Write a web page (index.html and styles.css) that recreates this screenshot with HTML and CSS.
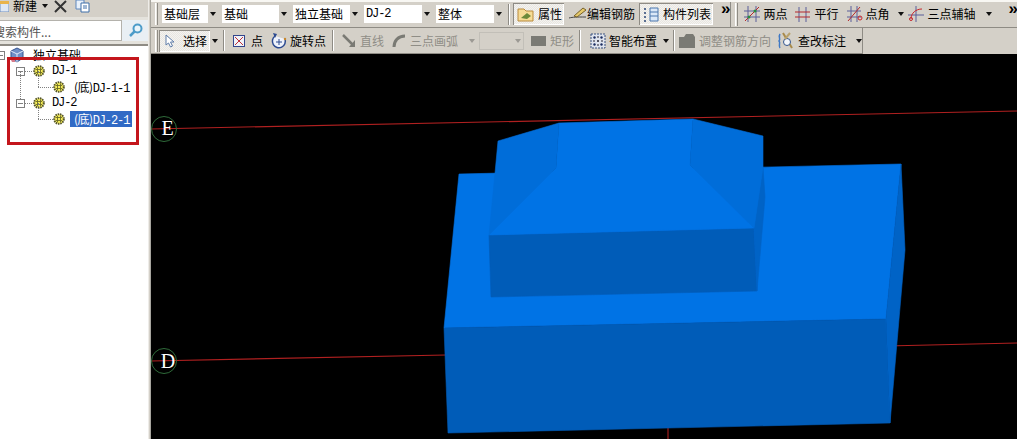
FILE: index.html
```html
<!DOCTYPE html>
<html lang="zh">
<head>
<meta charset="utf-8">
<title>独立基础</title>
<link rel="stylesheet" href="styles.css">
</head>
<body>
<svg class="defs" width="0" height="0">
  <symbol id="gear" viewBox="0 0 12 12">
    <circle cx="6" cy="6" r="4.800" fill="#f7ee5a" stroke="#55552a" stroke-width="2" stroke-dasharray="1.500 .8"/>
    <path d="M3 4.500h6M3 7.500h6M4.500 3v6M7.500 3v6" stroke="#6b6b26" stroke-width=".9"/>
  </symbol>
</svg>
<div class="app">
  <aside class="side">
    <div class="side-top">
      <svg class="ic-new" width="9" height="11" viewBox="0 0 9 11"><path d="M0 2h9v9H0z" fill="#dfe8f4" stroke="#6d8fbf"/><path d="M0 0h9v3H0z" fill="#e9b44c"/></svg>
      <span class="side-new">新建</span>
      <i class="arrow side-arrow"></i>
      <svg class="ic-x" width="13" height="13" viewBox="0 0 13 13"><path d="M1 1l11 11M12 1L1 12" stroke="#333" stroke-width="2"/></svg>
      <svg class="ic-copy" width="15" height="13" viewBox="0 0 15 13"><path d="M1 0h8v9H1z" fill="#e8f0fa" stroke="#5e87bd"/><path d="M6 3h8v9H6z" fill="#fff" stroke="#3f6ea8"/><path d="M8 6h4M8 8h4" stroke="#3f6ea8"/></svg>
    </div>
    <div class="search">
      <div class="search-box"><span class="search-text">搜索构件...</span></div>
      <div class="search-btn">
        <svg width="15" height="15" viewBox="0 0 15 15"><circle cx="9.500" cy="5.500" r="4" fill="#eaf5fb" stroke="#4d9cc9" stroke-width="2"/><path d="M6.500 8.500L2 13" stroke="#4d9cc9" stroke-width="2.500"/></svg>
      </div>
    </div>
    <div class="tree">
      <div class="node root">
        <span class="exp"></span>
        <svg class="cube" width="16" height="16" viewBox="0 0 16 16"><path d="M8 1l6 3v7l-6 4-6-4V4z" fill="#6f8fc8" stroke="#35538f"/><path d="M2 4l6 3 6-3M8 7v8" stroke="#dfe8f8" fill="none"/><path d="M1 11h5v4H3z" fill="#d87a8a"/></svg>
        <span class="lbl">独立基础</span>
      </div>
      <div class="node lvl1">
        <span class="exp"></span><i class="dash"></i><svg class="gear"><use href="#gear"/></svg><span class="lbl">DJ-1</span>
      </div>
      <div class="node lvl2 elbow">
        <i class="dash long"></i><svg class="gear"><use href="#gear"/></svg><span class="lbl pad"><span class="cjk">(底)</span>DJ-1-1</span>
      </div>
      <div class="node lvl1 up">
        <span class="exp"></span><i class="dash"></i><svg class="gear"><use href="#gear"/></svg><span class="lbl">DJ-2</span>
      </div>
      <div class="node lvl2 elbow">
        <i class="dash long"></i><svg class="gear"><use href="#gear"/></svg><span class="lbl pad sel"><span class="cjk">(底)</span>DJ-2-1</span>
      </div>
      <div class="redbox"></div>
    </div>
  </aside>
  <div class="split"></div>
  <main class="main">
    <div class="bar bar-1">
      <div class="tb tb-a">
        <i class="grip"></i>
        <div class="combo c1"><span class="combo-val">基础层</span><b class="combo-arrow"><i class="arrow"></i></b></div>
        <div class="combo c2"><span class="combo-val">基础</span><b class="combo-arrow"><i class="arrow"></i></b></div>
        <div class="combo c3"><span class="combo-val">独立基础</span><b class="combo-arrow"><i class="arrow"></i></b></div>
        <div class="combo c4"><span class="combo-val mono">DJ-2</span><b class="combo-arrow"><i class="arrow"></i></b></div>
        <div class="combo c5"><span class="combo-val">整体</span><b class="combo-arrow"><i class="arrow"></i></b></div>
        <i class="sep sep-a"></i>
        <div class="btn checked b-attr">
          <svg width="17" height="16" viewBox="0 0 17 16"><path d="M1 3h6l2 2h7v10H1z" fill="#f6dc96" stroke="#b98a3c"/><path d="M4 12l6-5 4 3-4 3z" fill="#6c8a3a"/></svg><span>属性</span>
        </div>
        <div class="btn b-edit">
          <svg width="18" height="14" viewBox="0 0 18 14"><path d="M0 11c4-1 7-1 17-1" stroke="#444" fill="none"/><path d="M5 9L14 1l3 2-9 7z" fill="#e6c96a" stroke="#77622a"/></svg><span>编辑钢筋</span>
        </div>
        <div class="btn checked b-list">
          <svg width="16" height="15" viewBox="0 0 16 15"><path d="M1 2h3M1 6h3M1 10h3M1 14h3" stroke="#5b6f92" stroke-dasharray="2 1" stroke-width="2"/><path d="M7 1h8v13H7z" fill="#dbe8f8" stroke="#4b76ad"/><path d="M7 5h8M7 9h8" stroke="#4b76ad"/></svg><span>构件列表</span>
        </div>
        <span class="more more-a">»</span>
      </div>
      <div class="tb tb-b">
        <i class="grip grip-wide"></i>
        <div class="tool t-two">
          <svg width="16" height="16" viewBox="0 0 16 16"><path d="M4 0v16M12 0v16M0 5h16M0 11h16" stroke="#5a5f9a"/><path d="M1 15L15 1" stroke="#b5282c"/><circle cx="11" cy="5" r="1.500" fill="#2a8c3e"/><circle cx="5" cy="11" r="1.500" fill="#2a8c3e"/></svg><span>两点</span>
        </div>
        <div class="tool t-par">
          <svg width="15" height="15" viewBox="0 0 15 15"><path d="M4 0v15M11 0v15" stroke="#5a5f9a"/><path d="M0 5h15M0 10h15" stroke="#b5282c"/></svg><span>平行</span>
        </div>
        <div class="tool t-ang">
          <svg width="16" height="16" viewBox="0 0 16 16"><path d="M4 0v16M10 0v16M0 5h14M0 11h14" stroke="#5a5f9a"/><path d="M1 15L13 1" stroke="#b5282c"/><circle cx="13" cy="12" r="2" fill="none" stroke="#c8282c"/></svg><span>点角</span><i class="arrow a-gap"></i>
        </div>
        <div class="tool t-three">
          <svg width="16" height="16" viewBox="0 0 16 16"><path d="M8 0v16M0 9h16" stroke="#5a5f9a"/><path d="M3 13C3 7 8 3 14 3" stroke="#c8282c" fill="none"/><circle cx="3" cy="13" r="1.500" fill="none" stroke="#c8282c"/></svg><span>三点辅轴</span><i class="arrow a-gap"></i>
        </div>
        <span class="more more-b">»</span>
      </div>
    </div>
    <div class="bar bar-2">
      <div class="tb tb-c">
        <i class="grip"></i>
        <div class="btn checked b-sel">
          <svg width="12" height="14" viewBox="0 0 12 14"><path d="M2 1v10l2.500-2 2 4 2-1-2-4H10z" fill="#fff" stroke="#5f7da8"/></svg><span>选择</span>
        </div>
        <i class="arrow a-sel"></i>
        <i class="sep sep-b"></i>
        <div class="tool t-pt">
          <svg width="12" height="12" viewBox="0 0 12 12"><rect x=".5" y=".5" width="11" height="11" fill="#f0f2f8" stroke="#33458c"/><path d="M2 2l8 8M10 2l-8 8" stroke="#c0303a"/></svg><span>点</span>
        </div>
        <div class="tool t-rot">
          <svg width="16" height="16" viewBox="0 0 16 16"><path d="M4 3a6.500 6.500 0 1 0 10 3" fill="#eef2fb" stroke="#2c4a90" stroke-width="1.500"/><path d="M2 0l4 1-2 4z" fill="#2c4a90"/><path d="M8 6v6M5 9h6" stroke="#2c4a90"/><circle cx="14" cy="6" r="1.200" fill="#c8882c"/></svg><span>旋转点</span>
        </div>
        <i class="sep sep-c"></i>
        <div class="tool off t-line">
          <svg width="14" height="13" viewBox="0 0 14 13"><path d="M1 1l10 10" stroke="#7a7a74" stroke-width="2.500"/><path d="M13 6v7H7z" fill="#7a7a74"/></svg><span>直线</span>
        </div>
        <div class="tool off t-arc">
          <svg width="14" height="14" viewBox="0 0 14 14"><path d="M2 13C2 7 6 2 13 2" fill="none" stroke="#7a7a74" stroke-width="3"/></svg><span>三点画弧</span><i class="arrow off-arrow a-arc"></i>
        </div>
        <div class="combo-off"><i class="arrow off-arrow"></i></div>
        <div class="tool off t-rect">
          <i class="rect"></i><span>矩形</span>
        </div>
        <i class="sep sep-d"></i>
        <div class="tool t-smart">
          <svg width="16" height="16" viewBox="0 0 16 16"><rect x="1" y="1" width="14" height="14" fill="#dfe4ee" stroke="#39507f" stroke-dasharray="2 1"/><path d="M8 3v10M3 8h10" stroke="#223" stroke-dasharray="2 2"/><circle cx="4.500" cy="4.500" r="1.200" fill="#1b2c60"/><circle cx="11.500" cy="4.500" r="1.200" fill="#1b2c60"/><circle cx="4.500" cy="11.500" r="1.200" fill="#1b2c60"/><circle cx="11.500" cy="11.500" r="1.200" fill="#1b2c60"/></svg><span>智能布置</span><i class="arrow a-smart"></i>
        </div>
        <i class="sep sep-e"></i>
        <div class="tool off t-adj">
          <svg width="16" height="14" viewBox="0 0 16 14"><path d="M0 3h5l2-3h7l2 3v11H0z" fill="#7a7a74"/></svg><span>调整钢筋方向</span>
        </div>
        <div class="tool t-fix">
          <svg width="18" height="18" viewBox="0 0 18 18"><path d="M3 2c-2 3 1 5-1 7 2 2-1 4 1 7" fill="none" stroke="#3f78c4" stroke-width="1.500"/><path d="M6 1l9 15" stroke="#a98a4a" stroke-width="2"/><circle cx="10" cy="10" r="3.500" fill="#f3f6fa" stroke="#33548c"/><path d="M13 1l-5 6" stroke="#b9a26c" stroke-width="2"/></svg><span>查改标注</span><i class="arrow a-fix"></i>
        </div>
      </div>
    </div>
    <div class="view">
      <svg class="scene" viewBox="151 54 866 385" aria-label="独立基础三维视图">
        <g class="grid">
          <path d="M151 129 L1017 111"/>
          <path d="M151 361 L446 355"/>
          <path d="M886 346 L1017 343"/>
          <path d="M668 425 V439"/>
        </g>
        <g class="axis">
          <circle cx="164" cy="129" r="12.500"/>
          <circle cx="164" cy="361" r="12.500"/>
        </g>
        <text class="axis-label" x="167.500" y="135">E</text>
        <text class="axis-label" x="168" y="368">D</text>
        <polygon class="top" points="459,174 901,164 886,319 444,328"/>
        <polygon class="front" points="444,328 886,319 890,423 448,433"/>
        <polygon class="side-face" points="901,164 905,250 890,423 886,319"/>
        <polygon class="front" points="489,235 754,228 757,291 491,297"/>
        <polygon class="side-face" points="763,167 765,197 757,291 754,228"/>
        <polygon class="top" points="489,235 556,168 559,123 693,119 690,165 754,228"/>
        <polygon class="facet" points="498,141 559,123 556,168 489,235 495,173"/>
        <polygon class="facet" points="693,119 763,136 763,167 754,228 690,165"/>
      </svg>
    </div>
  </main>
</div>
</body>
</html>
```
FILE: styles.css
```css
* { box-sizing: border-box; }
html, body { margin: 0; height: 100%; overflow: hidden; }
body {
  background: #d4d0c8;
  color: #000;
  font: 12px/16px "Noto Sans CJK SC", "Liberation Sans", sans-serif;
}
.defs { position: absolute; }
.app { display: flex; height: 439px; }

/* left panel */
.side { width: 148px; display: flex; flex-direction: column; background: #d4d0c8; overflow: hidden; }
.side-top { height: 17px; display: flex; align-items: center; padding-bottom: 5px; overflow: hidden; }
.ic-new { margin-left: 0; }
.side-new { margin-left: 4px; width: 27px; }
.side-arrow { margin-left: 2px; }
.ic-x { margin-left: 6px; }
.ic-copy { margin-left: 8px; }
.search { height: 29px; display: flex; border-bottom: 2px solid #8e8b84; padding: 3px 0 3px; background: #e4e2dc; }
.search-box { width: 122px; background: #fff; border: 1px solid #b4b2ac; border-left: 0; overflow: hidden; white-space: nowrap; }
.search-text { display: block; margin-left: -7px; color: #555; line-height: 21px; font-size: 12px; }
.search-btn { flex: 1; display: flex; align-items: center; justify-content: center; background: #e9eff4; }
.tree { position: relative; flex: 1; background: #fff; padding-top: 1px; }
.node { position: relative; height: 16px; display: flex; align-items: center; white-space: nowrap; }
.exp { width: 9px; height: 9px; border: 1px solid #808080; background: linear-gradient(#808080, #808080) center / 5px 1px no-repeat #fff; flex: none; }
.root { padding-left: 0; margin-left: -4px; }
.root .cube { margin-left: 4px; }
.root .lbl { margin-left: 8px; }
.lvl1 { padding-left: 16px; }
.lvl2 { padding-left: 38px; }
.gear { width: 12px; height: 12px; flex: none; }
.lvl1 .lbl { margin-left: 7px; }
.lvl1 .gear { margin-left: 0; }
.lbl { font-family: "Liberation Mono", "Noto Sans CJK SC", monospace; letter-spacing: -1.100px; }
.root .lbl, .cjk { font-family: "Noto Sans CJK SC", sans-serif; letter-spacing: -.500px; }
.root .lbl { letter-spacing: 0; }
.pad { margin-left: 5px; padding: 0 3px 0 4px; height: 16px; line-height: 16px; }
.sel { background: #316ac5; color: #fff; }
.dash { width: 7px; border-top: 1px dotted #808080; flex: none; }
.dash.long { width: 15px; margin-right: 0; }
.lvl1 .dash { margin-right: 1px; }
.elbow::before {
  content: ""; position: absolute; left: 38px; top: -8px; height: 16px;
  border-left: 1px dotted #808080;
}
.up::before {
  content: ""; position: absolute; left: 20px; top: -24px; height: 28px;
  border-left: 1px dotted #808080;
}
.redbox { position: absolute; left: 7px; top: 11px; width: 132px; height: 88px; border: 3px solid #c4161c; }

.split { width: 3px; background: linear-gradient(90deg, #eeece8 0 1px, #d4d0c8 1px 2px, #a8a69f 2px); }

/* toolbars */
.main { flex: 1; min-width: 0; display: flex; flex-direction: column; }
.bar { display: flex; flex: none; }
.bar-1 { height: 28px; border-top: 2px solid #f8f7f3; border-bottom: 1px solid #8e8b84; }
.bar-2 { height: 26px; }
.tb { display: flex; align-items: center; white-space: nowrap; }
.tb-a { width: 582px; padding: 0 0 1px 4px; border-right: 1px solid #8e8b84; }
.tb-b { flex: 1; padding: 0 0 1px 4px; }
.tb-c { width: 712px; padding-left: 4px; background: #d4d0c8; border-right: 1px solid #8e8b84; border-bottom: 1px solid #8e8b84; height: 26px; }
.grip { width: 3px; height: 22px; border-left: 1px solid #fff; border-right: 1px solid #8e8b84; background: #e8e6e0; flex: none; }
.grip-wide { height: 23px; }
.sep { width: 2px; height: 21px; border-left: 1px solid #8e8b84; border-right: 1px solid #fff; flex: none; }
.arrow { display: inline-block; width: 0; height: 0; border: 3px solid transparent; border-top: 4px solid #111; border-bottom: 0; flex: none; }
.off-arrow { border-top-color: #9c9a94; }

.combo { display: flex; height: 18px; margin-left: 4px; }
.combo-val { background: #fff; line-height: 18px; padding-left: 2px; overflow: hidden; }
.combo-arrow { width: 10px; display: flex; align-items: center; justify-content: center; background: #d4d0c8; }
.c1 { margin-left: 4px; }
.c1 .combo-val { width: 46px; }
.c2 .combo-val { width: 57px; }
.c3 .combo-val { width: 57px; }
.c4 .combo-val { width: 58px; }
.c5 .combo-val { width: 58px; }
.mono { font-family: "Liberation Mono", monospace; letter-spacing: -1.100px; }

.btn, .tool { display: flex; align-items: center; height: 22px; flex: none; }
.btn svg, .tool svg, .tool .rect { flex: none; }
.checked {
  background: repeating-conic-gradient(#e8e6e1 0 25%, #f4f3f0 0 50%) 0 0 / 2px 2px;
  box-shadow: inset 1px 1px #8e8b84, inset -1px -1px #fff;
}
.sep-a { margin: 0 3px 0 4px; }
.b-attr { width: 51px; padding-left: 4px; gap: 4px; }
.b-edit { width: 72px; padding-left: 3px; margin-left: 2px; gap: 0; }
.b-list { width: 74px; padding-left: 4px; gap: 4px; margin-left: 1px; }
.more { font: bold 17px/14px "Liberation Sans", sans-serif; flex: none; }
.more-a { margin: -10px 0 0 8px; }
.more-b { margin: -10px 0 0 17px; }

.t-two { margin-left: 6px; gap: 3px; }
.t-par { margin-left: 8px; gap: 4px; }
.t-ang { margin-left: 8px; gap: 3px; }
.t-three { margin-left: 4px; gap: 4px; }
.t-ang .a-gap { margin-left: 5px; }
.t-three .a-gap { margin-left: 6px; }

.b-sel { width: 51px; padding-left: 5px; gap: 7px; margin-left: 1px; }
.a-sel { margin: 0 5px 0 2px; }
.t-pt { margin-left: 8px; gap: 6px; }
.t-rot { margin-left: 8px; gap: 3px; }
.sep-c { margin-left: 6px; }
.off { color: #8f8d86; }
.t-line { margin-left: 8px; gap: 4px; }
.t-arc { margin-left: 8px; gap: 4px; }
.a-arc { margin-left: 7px; }
.combo-off { width: 53px; height: 18px; margin-left: 4px; border: 1px solid #c2bfb8; display: flex; align-items: center; justify-content: flex-end; padding-right: 2px; }
.t-rect { margin-left: 7px; gap: 4px; }
.rect { width: 15px; height: 10px; background: #7a7a74; }
.sep-d { margin-left: 5px; }
.t-smart { margin-left: 9px; gap: 3px; }
.a-smart { margin-left: 3px; }
.sep-e { margin-left: 4px; }
.t-adj { margin-left: 4px; gap: 4px; }
.t-fix { margin-left: 6px; gap: 3px; }
.a-fix { margin-left: 7px; }

/* 3d view */
.view { flex: 1; min-height: 0; background: #000; overflow: hidden; }
.scene { display: block; width: 100%; height: 100%; }
.grid path { stroke: #b02020; stroke-width: 1.100; fill: none; }
.axis circle { fill: none; stroke: #2f6b3a; stroke-width: 1; }
.axis-label { fill: #fff; font: 20px "Liberation Serif", serif; text-anchor: middle; }
polygon { stroke-width: .6; stroke-linejoin: round; }
.top { fill: #0073e5; stroke: #0073e5; }
.front { fill: #005cb8; stroke: #005cb8; }
.side-face { fill: #0063c6; stroke: #0063c6; }
.facet { fill: #006dd9; stroke: #006dd9; }
```
